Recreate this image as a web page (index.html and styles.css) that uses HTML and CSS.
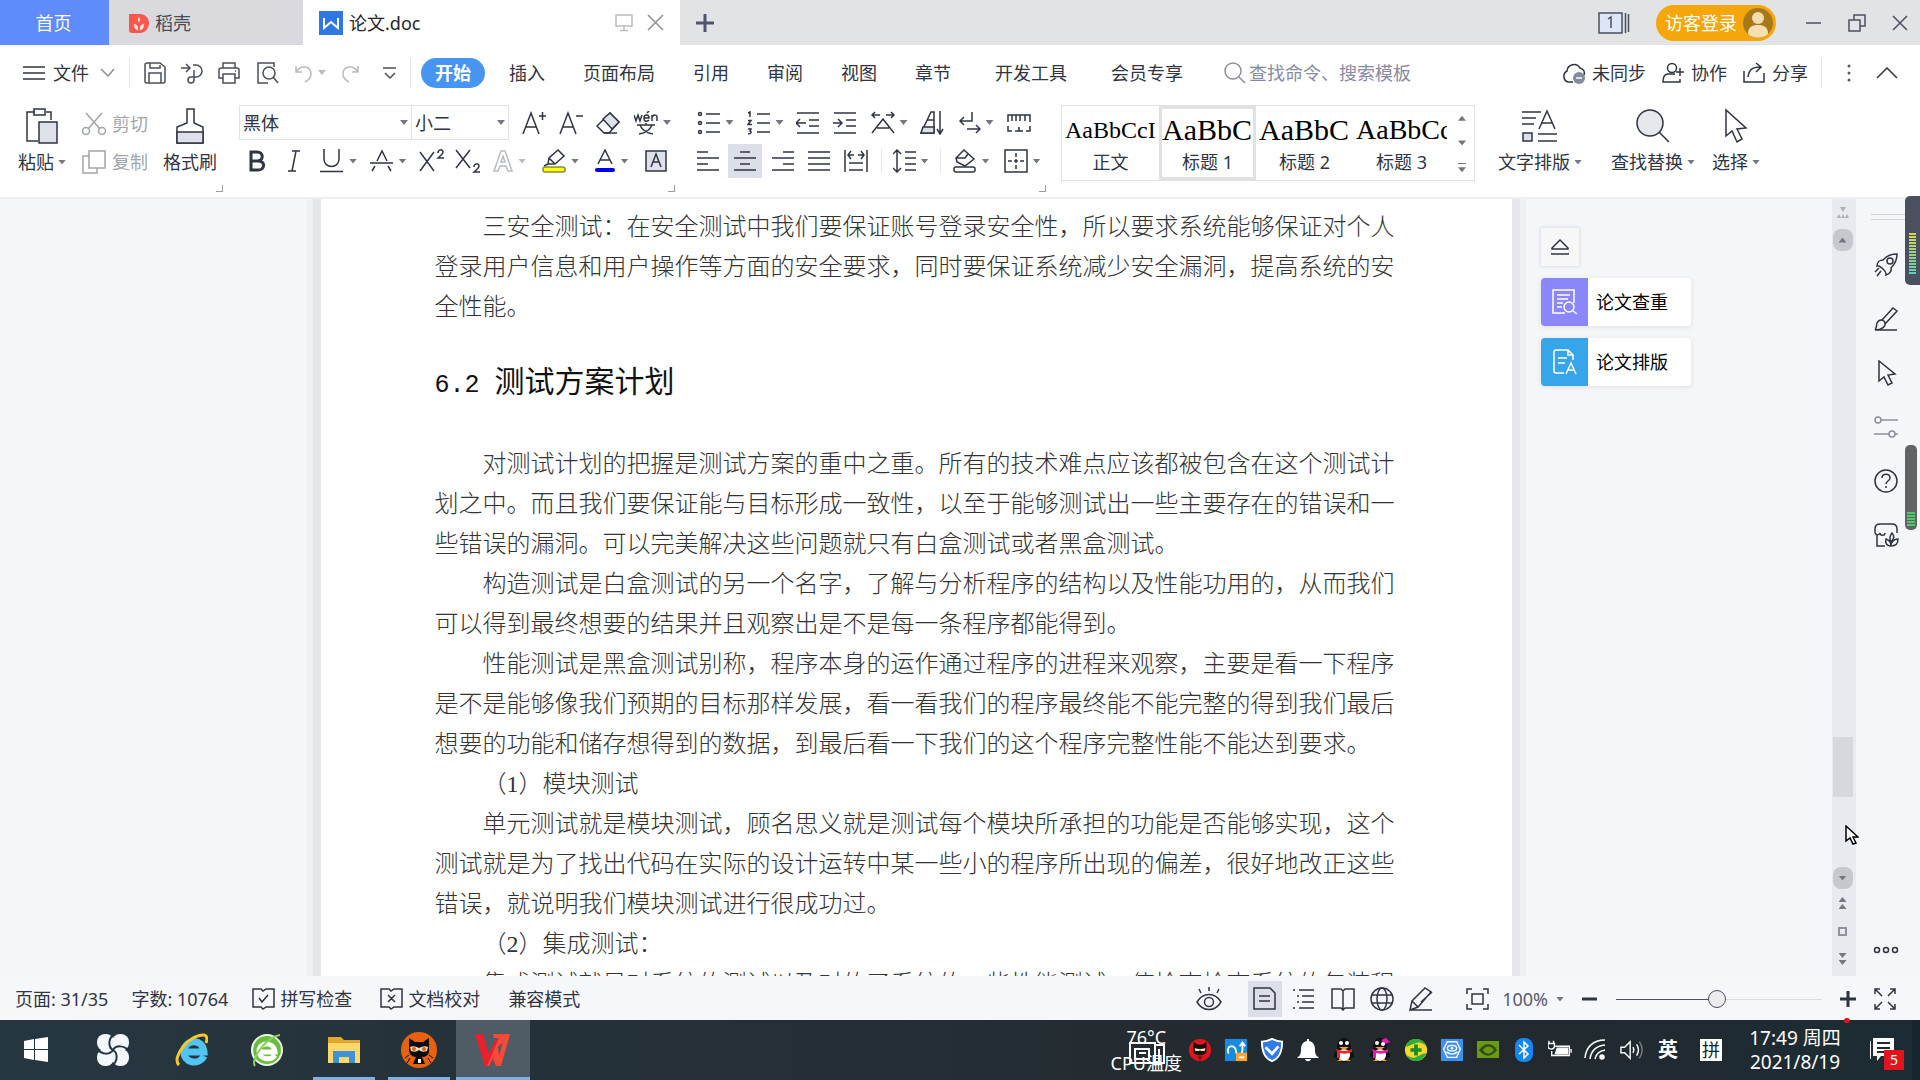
FILE: index.html
```html
<!DOCTYPE html>
<html lang="zh-CN">
<head>
    <meta charset="UTF-8">
    <meta name="viewport" content="width=device-width, initial-scale=1.0">
    <title>论文.doc</title>
    <link rel="stylesheet" href="styles.css">
</head>
<body>
    <!-- window tabs -->
    <header class="tabbar">
        <button class="tab tab-home">首页</button>
        <button class="tab tab-store">
            <svg width="20" height="22" viewBox="0 0 20 22"><path d="M0 2h11c5 0 9 4 9 9s-4 10-9 10H3a3 3 0 0 1-3-3z" fill="#f8574c"/><path d="M10 19V9M10 19c-5-1-6-4-5-8 3 1 5 3 5 8zM10 19c5-1 6-4 5-8-3 1-5 3-5 8zM10 12c-2-3-2-5 0-8 2 3 2 5 0 8z" fill="#ffe0dc" stroke="#f8574c" stroke-width="1"/></svg>
            稻壳
        </button>
        <div class="tab tab-doc">
            <svg width="24" height="24" viewBox="0 0 24 24"><path d="M0 0h24v24H0z" fill="#2f78e4"/><path d="M5 7v10l7-6 7 6V7" fill="none" stroke="#fff" stroke-width="2"/></svg>
            <span class="tab-name">论文.doc</span>
            <button class="icon-btn" aria-label="演示"><svg class="ic light" width="18" height="18" viewBox="0 0 18 18"><path d="M1 1h16v11H1zM9 12v4M5 16.500h8"/></svg></button>
            <button class="icon-btn" aria-label="关闭标签"><svg class="ic grey" width="17" height="17" viewBox="0 0 17 17"><path d="M1 1l15 15M16 1L1 16"/></svg></button>
        </div>
        <button class="icon-btn new-tab" aria-label="新建"><svg class="ic" width="18" height="18" viewBox="0 0 18 18"><path d="M9 0v18M0 9h18" stroke-width="3"/></svg></button>
        <div class="window-tools">
            <button class="icon-btn" aria-label="标签列表"><svg class="ic" width="32" height="22" viewBox="0 0 32 22"><path d="M1 1h23v20H1z" fill="#dde6f5"/><path d="M27.500 1v20M30.500 2v18M10 7l3-2v11"/></svg></button>
            <button class="login">访客登录
                <svg width="30" height="30" viewBox="0 0 30 30"><circle cx="15" cy="15" r="15" fill="#a8791a"/><circle cx="15" cy="10" r="6" fill="#f3dcae"/><path d="M5 26c0-7 4-9 10-9s10 2 10 9c-5 5-15 5-20 0z" fill="#f6dfb1"/></svg>
            </button>
            <button class="icon-btn" aria-label="最小化"><svg class="ic" width="16" height="18" viewBox="0 0 16 18"><path d="M0 9h15"/></svg></button>
            <button class="icon-btn" aria-label="还原"><svg class="ic" width="18" height="18" viewBox="0 0 18 18"><path d="M1 6h11v11H1zM6 6V1h11v11h-5"/></svg></button>
            <button class="icon-btn" aria-label="关闭"><svg class="ic" width="17" height="17" viewBox="0 0 17 17"><path d="M1 2l14 14M15 2L1 16"/></svg></button>
        </div>
    </header>

    <!-- menu row -->
    <nav class="menubar">
        <button class="file-menu">
            <svg class="ic" width="22" height="16" viewBox="0 0 22 16"><path d="M0 2h22M0 8h22M0 14h22"/></svg>
            文件
            <svg class="ic grey" width="15" height="9" viewBox="0 0 15 9"><path d="M1 1l7 7 6-7"/></svg>
        </button>
        <span class="sep"></span>
        <div class="quick">
            <button class="icon-btn" aria-label="保存"><svg class="ic" width="22" height="22" viewBox="0 0 22 22"><path d="M1 3q0-2 2-2h13l5 4v14q0 2-2 2H3q-2 0-2-2zM5 21V11h12v10M6 1v5h10V3"/></svg></button>
            <button class="icon-btn" aria-label="输出"><svg class="ic" width="22" height="22" viewBox="0 0 22 22"><path d="M0 6h9M5 2l4 4-4 4M12 3h3a5.500 5.500 0 0 1 0 12h-5a3 3 0 1 0 3 3V8"/></svg></button>
            <button class="icon-btn" aria-label="打印"><svg class="ic" width="22" height="22" viewBox="0 0 22 22"><path d="M5 6V1h12v5M5 16H1V8q0-2 2-2h16q2 0 2 2v8h-4M5 12h12v9H5zM17 9h1"/></svg></button>
            <button class="icon-btn" aria-label="打印预览"><svg class="ic" width="24" height="22" viewBox="0 0 24 22"><path d="M19 5V1H3v20h10"/><circle cx="14" cy="11" r="6"/><path d="M18 15l5 6"/></svg></button>
            <button class="icon-btn split" aria-label="撤销"><svg class="ic light" width="18" height="20" viewBox="0 0 18 20"><path d="M1 3v6h6M1 9c5-8 15-6 15 2 0 4-2 6-6 8"/></svg><i class="caret pale"></i></button>
            <button class="icon-btn" aria-label="恢复"><svg class="ic light" width="18" height="20" viewBox="0 0 18 20"><path d="M17 3v6h-6M17 9C12 1 2 3 2 11c0 4 2 6 6 8"/></svg></button>
            <button class="icon-btn" aria-label="自定义"><svg class="ic" width="14" height="14" viewBox="0 0 14 14"><path d="M0 2h13M2 7l5 5 5-5"/></svg></button>
        </div>
        <span class="sep"></span>
        <div class="menus">
            <button class="active">开始</button>
            <button>插入</button>
            <button>页面布局</button>
            <button>引用</button>
            <button>审阅</button>
            <button>视图</button>
            <button>章节</button>
            <button>开发工具</button>
            <button>会员专享</button>
        </div>
        <label class="search">
            <svg class="ic grey" width="22" height="22" viewBox="0 0 22 22"><circle cx="9" cy="9" r="8"/><path d="M15 15l6 6"/></svg>
            <input type="text" aria-label="搜索" placeholder="查找命令、搜索模板">
        </label>
        <div class="share-tools">
            <button><svg class="ic" width="25" height="22" viewBox="0 0 25 22"><path d="M12 20H7a6 6 0 0 1-1-11 7 7 0 0 1 13-3c4 1 5 4 4 7"/><circle cx="18" cy="16" r="6" fill="#858b98" stroke="none"/><path d="M15 16h6" stroke="#fff"/></svg>未同步</button>
            <button><svg class="ic" width="23" height="22" viewBox="0 0 23 22"><circle cx="10" cy="6" r="4.500"/><path d="M13 12H6c-3 0-5 3-5 8h17v-3M14 10h8M18 6v8"/></svg>协作</button>
            <button><svg class="ic" width="23" height="22" viewBox="0 0 23 22"><path d="M1 9v11h20V11M5 15c1-7 4-10 12-10M13 1l5 4-5 5"/></svg>分享</button>
        </div>
        <span class="sep"></span>
        <button class="icon-btn more" aria-label="更多"><svg width="4" height="20" viewBox="0 0 4 20" fill="#555b67"><circle cx="2" cy="3" r="1.500"/><circle cx="2" cy="10" r="1.500"/><circle cx="2" cy="17" r="1.500"/></svg></button>
        <button class="icon-btn" aria-label="收起功能区"><svg class="ic" width="22" height="12" viewBox="0 0 22 12"><path d="M1 11L11 1l10 10"/></svg></button>
    </nav>

    <!-- ribbon -->
    <section class="ribbon">
        <div class="group clipboard">
            <button class="big">
                <svg class="ic" width="32" height="36" viewBox="0 0 32 36"><path d="M9 4H1v29h11M20 4h5v8M8 1h11v6H8z"/><path d="M13 14h18v21H13z" fill="#dfe1ea"/></svg>
                <span>粘贴<i class="caret"></i></span>
            </button>
            <div class="stack">
                <button class="off"><svg class="ic" width="24" height="24" viewBox="0 0 24 24"><path d="M4 1l14 16M20 1L6 17"/><circle cx="4" cy="19" r="3.500"/><circle cx="20" cy="19" r="3.500"/></svg>剪切</button>
                <button class="off"><svg class="ic" width="24" height="24" viewBox="0 0 24 24"><path d="M7 1h16v17H7zM7 6H1v17h14v-5"/></svg>复制</button>
            </div>
            <button class="big">
                <svg class="ic" width="28" height="36" viewBox="0 0 28 36"><path d="M11 15V1h7v14l9 4v16H1V19z"/><path d="M1 24h26v11H1z" fill="#dfe1ea"/></svg>
                <span>格式刷</span>
            </button>
            <i class="corner"></i>
        </div>

        <div class="group font">
            <div class="row font-row1">
                <div class="font-box">
                    <span class="pick pick-name"><select aria-label="字体"><option>黑体</option></select></span>
                    <span class="pick pick-size"><select aria-label="字号"><option>小二</option></select></span>
                </div>
                <button aria-label="增大字号"><svg class="ic" width="24" height="24" viewBox="0 0 24 24"><path d="M1 23L9 2l8 21M4 16h10M17 5h7M20.500 1v8"/></svg></button>
                <button aria-label="减小字号"><svg class="ic" width="24" height="24" viewBox="0 0 24 24"><path d="M1 23L9 2l8 21M4 16h10M17 5h7"/></svg></button>
                <button aria-label="清除格式"><svg class="ic" width="24" height="24" viewBox="0 0 24 24"><path d="M14 2l9 9-10 11H8l-7-7z"/><path d="M7 8l7-6 9 9-7 7z" fill="#dfe1ea"/><path d="M8 22h13"/></svg></button>
                <button aria-label="拼音指南" class="split"><svg class="ic" width="24" height="24" viewBox="0 0 24 24"><path d="M0 4l2 6 2-6 2 6 2-6M10 7h5c0-4-5-4-5 0s3 4 5 2M13 2l2-2M18 10V4m0 2c2-3 5-2 5 0v4M3 14h18M12 12v2M6 14c2 5 7 8 13 9M18 14c-2 5-7 8-13 9"/></svg><i class="caret"></i></button>
            </div>
            <div class="row font-row2">
                <button aria-label="加粗"><svg class="ic" width="18" height="22" viewBox="0 0 18 22"><path d="M3 2h6c7 0 7 9 0 9H3zM3 11h7c8 0 7 9 0 9H3z" stroke-width="3"/></svg></button>
                <button aria-label="倾斜"><svg class="ic" width="14" height="22" viewBox="0 0 14 22"><path d="M5 1h8M1 21h8M9 1L5 21"/></svg></button>
                <button aria-label="下划线" class="split"><svg class="ic" width="24" height="24" viewBox="0 0 24 24"><path d="M4 0v10c0 10 15 10 15 0V0M0 22.500h23"/></svg><i class="caret"></i></button>
                <button aria-label="删除线" class="split"><svg class="ic" width="24" height="24" viewBox="0 0 24 24"><path d="M0 14h23M7 12l5-10 5 10M5 17l-3 5M18 17l3 5"/></svg><i class="caret"></i></button>
                <button aria-label="上标"><svg class="ic" width="25" height="24" viewBox="0 0 25 24"><path d="M1 3l14 19M15 3L1 22M19 4c0-4 5-4 5-1 0 2-3 4-5 6h6"/></svg></button>
                <button aria-label="下标"><svg class="ic" width="25" height="24" viewBox="0 0 25 24"><path d="M1 1l14 18M15 1L1 19M19 18c0-4 5-4 5-1 0 2-3 4-5 6h6"/></svg></button>
                <button aria-label="文字效果" class="split"><svg class="ic light" width="20" height="22" viewBox="0 0 20 22"><path d="M1 21L8 1h4l7 20h-4l-2-5H7l-2 5zM8 12h4l-2-6z"/></svg><i class="caret pale"></i></button>
                <button aria-label="突出显示" class="split"><svg class="ic" width="24" height="24" viewBox="0 0 24 24"><path d="M6 15l1-6 9-8 6 6-9 8zM7 9l6 6M6 15l-4 2"/><rect x="1" y="18" width="22" height="5" rx="2" fill="#ff0" stroke="#888b45"/></svg><i class="caret"></i></button>
                <button aria-label="字体颜色" class="split"><svg class="ic" width="22" height="24" viewBox="0 0 22 24"><path d="M4 15l7-14 7 14M6 11h10"/><rect x="1" y="19" width="20" height="4" rx="2" fill="#0000e8" stroke="none"/></svg><i class="caret"></i></button>
                <button aria-label="字符底纹"><svg class="ic" width="22" height="22" viewBox="0 0 22 22"><path d="M1 1h20v20H1z" fill="#dfe1ea"/><path d="M6 17l5-13 5 13M8 12h6"/></svg></button>
            </div>
            <i class="corner"></i>
        </div>

        <div class="group paragraph">
            <div class="row para-row1">
                <button aria-label="项目符号" class="split"><svg class="ic" width="24" height="24" viewBox="0 0 24 24"><circle cx="3" cy="3" r="1.500"/><circle cx="3" cy="12" r="1.500"/><circle cx="3" cy="21" r="1.500"/><path d="M9 3h14M9 12h14M9 21h14"/></svg><i class="caret"></i></button>
                <button aria-label="编号" class="split"><svg class="ic" width="24" height="24" viewBox="0 0 24 24"><path d="M1 2l2-1v5M1 9.500h3l-3 4h4M1 18h3l-1 2c2 1 1 3-2 3M10 3h13M10 12h13M10 21h13"/></svg><i class="caret"></i></button>
                <button aria-label="减少缩进"><svg class="ic" width="24" height="24" viewBox="0 0 24 24"><path d="M1 2h22M13 9h10M13 15h10M1 22h22M0 12h10M4 8l-4 4 4 4"/></svg></button>
                <button aria-label="增加缩进"><svg class="ic" width="24" height="24" viewBox="0 0 24 24"><path d="M1 2h22M13 9h10M13 15h10M1 22h22M0 12h9M5 8l4 4-4 4"/></svg></button>
                <button aria-label="中文版式" class="split"><svg class="ic" width="24" height="24" viewBox="0 0 24 24"><path d="M1 22L12 8l11 14M6 17h12M1 4h8M4 1L1 4l3 3M15 4h8M20 1l3 3-3 3"/></svg><i class="caret"></i></button>
                <button aria-label="排序"><svg class="ic" width="24" height="24" viewBox="0 0 24 24"><path d="M1 22L11 1h3v21z"/><path d="M3 16h11v6H1z" fill="#dfe1ea"/><path d="M7 9h7M20 0v22M17 18l3 5 3-5"/></svg></button>
                <button aria-label="换行" class="split"><svg class="ic" width="22" height="24" viewBox="0 0 22 24"><path d="M13 1v9H1M5 6l-4 4 4 4M8 18h13M17 14l4 4-4 4"/></svg><i class="caret"></i></button>
                <button aria-label="制表位"><svg class="ic" width="24" height="20" viewBox="0 0 24 20"><path d="M1 9V2h22v7M5 2v6M9 2v6M13 2v6M18 2v6M1 13v5h4M8 18h8M12 14v4M23 13v5h-4"/></svg></button>
            </div>
            <div class="row para-row2">
                <button aria-label="左对齐"><svg class="ic" width="22" height="22" viewBox="0 0 22 22"><path d="M0 2h11M0 8h22M0 14h11M0 20h22"/></svg></button>
                <button aria-label="居中对齐" class="on"><svg class="ic" width="22" height="22" viewBox="0 0 22 22"><path d="M6 2h10M0 8h22M6 14h10M0 20h22"/></svg></button>
                <button aria-label="右对齐"><svg class="ic" width="22" height="22" viewBox="0 0 22 22"><path d="M11 2h11M0 8h22M11 14h11M0 20h22"/></svg></button>
                <button aria-label="两端对齐"><svg class="ic" width="22" height="22" viewBox="0 0 22 22"><path d="M0 2h22M0 8h22M0 14h22M0 20h22"/></svg></button>
                <button aria-label="分散对齐"><svg class="ic" width="24" height="22" viewBox="0 0 24 22"><path d="M1 0v22M23 0v22M5 13h14M5 20h14M4 5h6M7 1L4 5l3 4M14 5h6M17 1l3 4-3 4"/></svg></button>
                <span class="sep"></span>
                <button aria-label="行距" class="split"><svg class="ic" width="23" height="24" viewBox="0 0 23 24"><path d="M4 1v22M0 5l4-4 4 4M0 19l4 4 4-4M12 3h11M12 9h11M12 15h11M12 21h11"/></svg><i class="caret"></i></button>
                <span class="sep"></span>
                <button aria-label="底纹颜色" class="split"><svg class="ic" width="24" height="24" viewBox="0 0 24 24"><path d="M3 9l8-8 10 9-9 7-8-4zM3 9h9l3-4"/><rect x="1" y="18" width="21" height="5" rx="2"/></svg><i class="caret"></i></button>
                <button aria-label="边框" class="split"><svg class="ic" width="24" height="24" viewBox="0 0 24 24"><path d="M1 1h22v22H1z"/><path d="M12 4v16M4 12h16" stroke-dasharray="4 2"/></svg><i class="caret"></i></button>
            </div>
            <i class="corner"></i>
        </div>

        <div class="gallery">
            <button class="style-item"><b class="s24">AaBbCcI</b>正文</button>
            <button class="style-item chosen"><b>AaBbC</b>标题 1</button>
            <button class="style-item"><b>AaBbC</b>标题 2</button>
            <button class="style-item"><b class="s26">AaBbCc</b>标题 3</button>
            <div class="gallery-arrows">
                <button aria-label="上一行"><i class="caret up"></i></button>
                <button aria-label="下一行"><i class="caret"></i></button>
                <button aria-label="展开样式" class="expand"><i class="caret"></i></button>
            </div>
        </div>

        <div class="group edit">
            <button class="big">
                <svg class="ic" width="36" height="34" viewBox="0 0 36 34"><path d="M0 3h19M0 9h14M0 15h12M17 20l8-18 8 18M20 14h10M16 25h19M16 32h19"/><path d="M1 24h9v8H1z" fill="#dfe1ea"/></svg>
                <span>文字排版<i class="caret"></i></span>
            </button>
            <button class="big">
                <svg class="ic" width="34" height="34" viewBox="0 0 34 34"><circle cx="14" cy="14" r="13" fill="#e6e8ec"/><path d="M23 23l10 10"/></svg>
                <span>查找替换<i class="caret"></i></span>
            </button>
            <button class="big">
                <svg class="ic" width="24" height="34" viewBox="0 0 24 34"><path d="M2 1v26l6-5 5 11 5-3-5-10 9-1z"/></svg>
                <span>选择<i class="caret"></i></span>
            </button>
        </div>
    </section>

    <!-- document -->
    <main class="workspace">
        <div class="canvas">
            <article class="page">
                <p>三安全测试：在安全测试中我们要保证账号登录安全性，所以要求系统能够保证对个人登录用户信息和用户操作等方面的安全要求，同时要保证系统减少安全漏洞，提高系统的安全性能。</p>
                <h2><span class="num">6.2 </span>测试方案计划</h2>
                <p>对测试计划的把握是测试方案的重中之重。所有的技术难点应该都被包含在这个测试计划之中。而且我们要保证能与目标形成一致性，以至于能够测试出一些主要存在的错误和一些错误的漏洞。可以完美解决这些问题就只有白盒测试或者黑盒测试。</p>
                <p>构造测试是白盒测试的另一个名字，了解与分析程序的结构以及性能功用的，从而我们可以得到最终想要的结果并且观察出是不是每一条程序都能得到。</p>
                <p>性能测试是黑盒测试别称，程序本身的运作通过程序的进程来观察，主要是看一下程序是不是能够像我们预期的目标那样发展，看一看我们的程序最终能不能完整的得到我们最后想要的功能和储存想得到的数据，到最后看一下我们的这个程序完整性能不能达到要求。</p>
                <p>（1）模块测试</p>
                <p>单元测试就是模块测试，顾名思义就是测试每个模块所承担的功能是否能够实现，这个测试就是为了找出代码在实际的设计运转中某一些小的程序所出现的偏差，很好地改正这些错误，就说明我们模块测试进行很成功过。</p>
                <p>（2）集成测试：</p>
                <p>集成测试就是对系统的测试以及对的了系统的一些性能测试，使检查检查系统的包装程</p>
            </article>
            <aside class="helpers">
                <button class="collapse" aria-label="收起"><svg class="ic" width="18" height="16" viewBox="0 0 18 16"><path d="M1 9l8-8 8 8v1H1zM0 15h18"/></svg></button>
                <button class="helper">
                    <span class="helper-icon violet"><svg class="ic" width="26" height="26" viewBox="0 0 26 26"><path d="M13 24H1V1h21v13M5 6h13M5 10h11M5 14h6M5 18h5"/><circle cx="17" cy="18" r="5"/><path d="M21 22l4 3"/></svg></span>
                    论文查重
                </button>
                <button class="helper">
                    <span class="helper-icon blue"><svg class="ic" width="26" height="26" viewBox="0 0 26 26"><path d="M12 24H4q-2 0-2-2V3q0-2 2-2h12l5 5v5M16 1v5h5M6 9h9M6 14h7M14 25l5-11 5 11M16 21h6"/></svg></span>
                    论文排版
                </button>
            </aside>
        </div>
        <div class="scrollbar">
            <svg class="scroll-top" width="14" height="14" viewBox="0 0 14 14" fill="#aeb0b7"><path d="M4 1h6L7 6zM1 12l2-4 2 4zM5 12l2-4 2 4zM9 12l2-4 2 4z"/></svg>
            <button class="round" aria-label="向上滚动"><i class="caret up"></i></button>
            <div class="track"><i class="thumb"></i></div>
            <button class="round" aria-label="向下滚动"><i class="caret"></i></button>
            <button aria-label="上一页" class="jump"><i class="caret up"></i><i class="caret up"></i></button>
            <button aria-label="选择浏览对象" class="jump"><i class="square"></i></button>
            <button aria-label="下一页" class="jump"><i class="caret"></i><i class="caret"></i></button>
        </div>
        <aside class="sidebar">
            <i class="grip"></i>
            <button aria-label="快速"><svg class="ic" width="26" height="26" viewBox="0 0 26 26"><path d="M9 16c-2-1-3-3-5-2 0-4 3-6 6-6 4-5 8-6 14-6 0 6-2 10-6 14 1 4-2 6-5 7 1-3-2-5-4-7z"/><circle cx="17" cy="9" r="3"/><path d="M6 16l-4 4M8 19l-4 5"/></svg></button>
            <button aria-label="画笔"><svg class="ic" width="26" height="26" viewBox="0 0 26 26"><path d="M9 14L20 2l4 3-12 13M2 24c2-2 1-4 2-7 2-4 7-4 8 0 1 3-3 7-10 7h22"/></svg></button>
            <button aria-label="选择窗格"><svg class="ic" width="26" height="26" viewBox="0 0 26 26"><path d="M6 1v20l5-4 4 8 4-2-4-8 7-1z"/></svg></button>
            <button aria-label="设置"><svg class="ic grey" width="26" height="26" viewBox="0 0 26 26"><circle cx="5" cy="6" r="3"/><path d="M8 6h17M1 20h15M22 20h3"/><circle cx="19" cy="20" r="3"/></svg></button>
            <button aria-label="帮助"><svg class="ic" width="26" height="26" viewBox="0 0 26 26"><circle cx="13" cy="13" r="11"/><path d="M9 10c0-5 8-5 8 0 0 3-4 3-4 6M13 18v2"/></svg></button>
            <button aria-label="稻壳商城"><svg class="ic" width="26" height="26" viewBox="0 0 26 26"><path d="M4 13v11h8M2 11V7c0-3 2-5 5-5h12c3 0 5 2 5 5v4M2 11c2 3 4 2 5 0 0 3 5 3 5 0M18 24c-5 0-6-4-5-7 3 1 5 3 5 7zM18 24c5 0 7-3 7-7-4 0-7 3-7 7zM18 20c-2-4-1-6 1-9 3 3 2 6-1 9z"/></svg></button>
            <button aria-label="更多工具" class="sidebar-more"><svg class="ic" width="26" height="8" viewBox="0 0 26 8"><circle cx="4" cy="4" r="2.500"/><circle cx="13" cy="4" r="2.500"/><circle cx="22" cy="4" r="2.500"/></svg></button>
        </aside>
        <svg class="pointer" width="14" height="20" viewBox="0 0 14 20"><path d="M1 1v15l4-3 3 6 3-1-3-6h5z" fill="#fff" stroke="#000" stroke-width="1.500"/></svg>
    </main>
    <div class="meter meter-top"><i></i></div>
    <div class="meter meter-low"><i></i></div>

    <!-- status bar -->
    <footer class="statusbar">
        <span>页面: 31/35</span>
        <span>字数: 10764</span>
        <button><svg class="ic" width="23" height="22" viewBox="0 0 23 22"><path d="M1 1h8l2 2 3-2h8v18h-8l-3 2-2-2H1zM7 10l3 4 6-7"/></svg>拼写检查</button>
        <button><svg class="ic" width="23" height="22" viewBox="0 0 23 22"><path d="M1 1h8l2 2 3-2h8v18h-8l-3 2-2-2H1zM8 7l7 7M15 7l-7 7"/></svg>文档校对</button>
        <span>兼容模式</span>
        <div class="views">
            <button aria-label="护眼模式"><svg class="ic" width="26" height="26" viewBox="0 0 26 26"><path d="M1 16c6-10 18-10 24 0-6 10-18 10-24 0zM13 1v4M3 3l2 4M23 3l-2 4"/><circle cx="13" cy="16" r="4.500"/></svg></button>
            <button aria-label="页面视图" class="on"><svg class="ic" width="24" height="24" viewBox="0 0 24 24"><path d="M1 1h16l5 5v16H1zM6 9h11M6 14h11"/></svg></button>
            <button aria-label="大纲"><svg class="ic" width="24" height="24" viewBox="0 0 24 24"><path d="M1 3h2M7 3h15M5 9h2M10 9h12M5 15h2M10 15h12M1 21h2M7 21h15"/></svg></button>
            <button aria-label="阅读版式"><svg class="ic" width="24" height="24" viewBox="0 0 24 24"><path d="M1 2h9l2 2 2-2h9v19h-9l-2 2-2-2H1zM12 4v18"/></svg></button>
            <button aria-label="Web版式"><svg class="ic" width="24" height="24" viewBox="0 0 24 24"><circle cx="12" cy="12" r="11"/><ellipse cx="12" cy="12" rx="5" ry="11"/><path d="M2 8h20M2 16h20"/></svg></button>
            <button aria-label="写作模式"><svg class="ic" width="26" height="26" viewBox="0 0 26 26"><path d="M2 24l2-9L17 2l6 4-13 15zM4 15l6 6M13 16L24 6M2 24h22"/></svg></button>
        </div>
        <div class="zoom">
            <button aria-label="适合页面"><svg class="ic" width="23" height="22" viewBox="0 0 23 22"><path d="M1 6V1h5M17 1h5v5M22 16v5h-5M6 21H1v-5M6 6h11v10H6z"/></svg></button>
            <button class="percent">100%<i class="caret"></i></button>
            <button aria-label="缩小"><svg class="ic" width="16" height="16" viewBox="0 0 16 16"><path d="M0 8h15" stroke-width="3"/></svg></button>
            <input type="range" aria-label="显示比例" min="0" max="100" value="49">
            <button aria-label="放大"><svg class="ic" width="16" height="16" viewBox="0 0 16 16"><path d="M0 8h16M8 0v16" stroke-width="3"/></svg></button>
            <button aria-label="全屏"><svg class="ic" width="22" height="22" viewBox="0 0 22 22"><path d="M1 6V1h5M1 1l7 7M16 1h5v5M21 1l-7 7M21 16v5h-5M21 21l-7-7M6 21H1v-5M1 21l7-7"/></svg></button>
        </div>
    </footer>

    <!-- taskbar -->
    <div class="taskbar">
        <div class="apps">
            <button aria-label="开始菜单"><svg width="26" height="26" viewBox="0 0 26 26" fill="#fff"><path d="M1 4l10-2v10H1zM12 2l13-2v12H12zM1 13h10v10L1 21zM12 13h13v12l-13-2z"/></svg></button>
            <button aria-label="浏览助手"><svg width="34" height="34" viewBox="0 0 34 34"><g fill="#f4f7fb"><rect x="1" y="1" width="17" height="17" rx="8"/><rect x="16" y="1" width="17" height="17" rx="8"/><rect x="1" y="16" width="17" height="17" rx="8"/><rect x="16" y="16" width="17" height="17" rx="8"/><path d="M11 11h12v12H11z"/></g><path d="M17 17C12 14 12 6 18 1M17 17c3-5 11-5 16 1M17 17c5 3 5 11-1 16M17 17c-3 5-11 5-16-1" fill="none" stroke="#263640" stroke-width="2"/></svg></button>
            <button aria-label="Internet Explorer"><svg width="34" height="34" viewBox="0 0 34 34" fill="none"><path d="M30 23c-5 10-21 7-20-5s19-13 20 1H12" stroke="#52c4f2" stroke-width="7"/><path d="M5 32C-3 25 15 1 30 2c4 1 3 5 2 8" stroke="#f5c62d" stroke-width="3"/></svg></button>
            <button aria-label="安全浏览器"><svg width="34" height="34" viewBox="0 0 34 34" fill="none"><circle cx="17" cy="17" r="15" fill="#69bd3c" stroke="#eef8e8" stroke-width="2"/><path d="M25 22c-4 6-16 5-16-4s15-10 16 1H11" stroke="#fff" stroke-width="5"/><path d="M5 33C0 27 16 4 30 2" stroke="#8ad05b" stroke-width="2"/></svg></button>
            <button aria-label="文件资源管理器" class="running"><svg width="34" height="30" viewBox="0 0 34 30"><path d="M1 2h13l3 3h16v23H1z" fill="#e0a92e"/><path d="M1 8h32v20H1z" fill="#ffd76a"/><path d="M6 28V16h22v12h-6v-6H12v6z" fill="#3d92d8"/></svg></button>
            <button aria-label="录屏" class="running"><svg width="36" height="36" viewBox="0 0 36 36"><circle cx="18" cy="18" r="18" fill="#e86110"/><path d="M8 6l6 4h8l6-4v13c0 5-5 6-7 6l3 7H12l3-7c-4 0-7-3-7-7z" fill="#0b0b0b"/><path d="M9 15q4-2 9 1 5-3 9-1l-1 4q-5 2-8-1-3 3-8 1z" fill="#f2d8c5"/><circle cx="13" cy="17" r="2" fill="#e86110"/><circle cx="23" cy="17" r="2" fill="#e86110"/><path d="M8 23l-4 3M9 26l-3 5M28 23l4 3M27 26l3 5" stroke="#111"/><path d="M17 27h3v4h-3z" fill="#fff"/></svg></button>
            <button aria-label="WPS" class="running current"><svg width="36" height="34" viewBox="0 0 36 34"><path d="M0 1h8l6 20 6-14h4l-2 10-7 16h-5z" fill="#e9202d"/><path d="M18 1h17l-9 32h-5l-3-8-4 8h-2L24 5h-5z" fill="#fa4934"/><path d="M23 14l1 9 4-14z" fill="#4f5c65"/></svg></button>
        </div>
        <div class="tray">
            <div class="cpu"><span>76°C</span><span>CPU温度</span><svg class="ic" width="38" height="26" viewBox="0 0 38 26"><path d="M1 3h25v20H1zM26 5h9v18h-9M6 9h14v10H6zM10 13h7M30 9v12" stroke-width="2"/></svg></div>
            <svg width="26" height="26" viewBox="0 0 26 26"><circle cx="13" cy="13" r="12" fill="#e3151b"/><path d="M6 4l4 3h6l4-3v11c0 5-14 5-14 0z" fill="#111"/><path d="M7 11l5 1h2l5-1-1 3h-4l-1-1-1 1H8z" fill="#ffe3b5"/><path d="M10 20h6l-3 4z" fill="#6d1010"/></svg>
            <svg width="26" height="26" viewBox="0 0 26 26"><path d="M1 1h24v24H1z" fill="#178be1"/><path d="M5 17c-4-9 7-11 8-3 0 6 7 6 7-2V6m-3 3l3-4 3 4" fill="none" stroke="#fff" stroke-width="2"/><path d="M13 16h12v9H13z" fill="#f9a634"/><path d="M16 21h6" stroke="#fff" stroke-width="2"/></svg>
            <svg width="26" height="26" viewBox="0 0 26 26"><path d="M13 1c4 2 7 3 11 3 0 11-3 18-11 21C5 22 2 15 2 4c4 0 7-1 11-3z" fill="#2f7be9" stroke="#fff" stroke-width="2"/><path d="M6 10l7 7 7-8" fill="none" stroke="#fff" stroke-width="3"/></svg>
            <svg width="24" height="24" viewBox="0 0 24 24" fill="#fff"><path d="M11 1h2v2c5 1 6 5 6 9 0 5 2 6 4 8H1c2-2 4-3 4-8 0-4 1-8 6-9zM9 21h6c-1 3-5 3-6 0z"/></svg>
            <svg width="24" height="26" viewBox="0 0 24 26"><path d="M5 12C5-3 19-3 19 12c5 7 3 10 1 8-2 7-14 7-16 0-2 2-4-1 1-8z" fill="#111"/><ellipse cx="12" cy="18" rx="6" ry="6" fill="#fff"/><path d="M4 12q8 4 16 0v3q-6 3-12 1v5H5v-6z" fill="#e7292c"/><circle cx="9" cy="6" r="2" fill="#fff"/><circle cx="15" cy="6" r="2" fill="#fff"/><path d="M7 10h10l-5 3zM5 24h6l-3-2zM13 24h6l-3-2z" fill="#f4a125"/></svg>
            <svg width="24" height="26" viewBox="0 0 24 26"><path d="M5 12C5-3 19-3 19 12c5 7 3 10 1 8-2 7-14 7-16 0-2 2-4-1 1-8z" fill="#111"/><ellipse cx="12" cy="18" rx="6" ry="6" fill="#fff"/><path d="M4 12q8 4 16 0v3q-6 3-12 1v5H5v-6zM13 3l5-2 4 4-5 2z" fill="#e918ae"/><circle cx="9" cy="6" r="2" fill="#fff"/><circle cx="15" cy="7" r="2" fill="#fff"/><path d="M7 10h10l-5 3zM5 24h6l-3-2zM13 24h6l-3-2z" fill="#f4a125"/></svg>
            <svg width="26" height="26" viewBox="0 0 26 26"><circle cx="13" cy="13" r="12" fill="#f6d72d"/><path d="M2 9C6-2 21-1 24 9c-4-5-9-5-12-3-5 1-7 4-10 3zM24 17c-4 10-17 11-22 1 5 4 9 4 12 2 4-1 6-4 10-3z" fill="#2cae3b"/><path d="M13 7v12M7 13h12" stroke="#168b2a" stroke-width="4"/></svg>
            <svg width="26" height="26" viewBox="0 0 26 26"><path d="M1 1h24v24H1z" fill="#3e90f0"/><g fill="none" stroke="#fff" stroke-width="1.500"><path d="M8 4h10l4 8-4 9H8l-4-9z"/><ellipse cx="13" cy="11" rx="5" ry="3"/><path d="M7 15q6 5 12 0"/></g><circle cx="13" cy="11" r="1.500" fill="#fff"/></svg>
            <svg width="24" height="20" viewBox="0 0 24 20"><path d="M1 1h22v17H1z" fill="#699a12"/><path d="M3 10c5-7 13-8 18 0-6 8-13 7-18 0zm4 0c3 5 8 4 11 0-4-5-8-4-11 0z" fill="#344c16"/></svg>
            <svg width="20" height="26" viewBox="0 0 20 26"><rect x="1" y="1" width="18" height="24" rx="8" fill="#1687f0"/><path d="M5 8l9 9-4 4V5l4 4-9 8" fill="none" stroke="#fff" stroke-width="1.500"/></svg>
            <svg class="ic" width="26" height="20" viewBox="0 0 26 20"><path d="M8 6h15v10H4v-5M1 0v3M6 0v3M0 3h7v3c0 4-7 4-7 0zM25 9v4"/><path d="M10 8h11v6H8z" fill="#fff"/></svg>
            <svg class="ic" width="24" height="24" viewBox="0 0 24 24"><path d="M1 20C2 9 9 2 21 2M6 21c1-8 6-13 15-14M11 21c1-5 4-8 10-9"/><circle cx="18" cy="19" r="2" fill="#fff"/></svg>
            <svg class="ic" width="26" height="22" viewBox="0 0 26 22"><path d="M1 8h4l6-6v18l-6-6H1zM14 8q2 3 0 6M18 5q4 6 0 12"/><path d="M21 2q6 9 0 18" stroke="#77818a"/></svg>
            <span class="ime">英</span>
            <span class="pinyin">拼</span>
            <div class="clock"><span>17:49 周四</span><span>2021/8/19</span><i class="rec-dot"></i></div>
            <button class="notice" aria-label="通知"><svg width="24" height="26" viewBox="0 0 24 26"><path d="M0 5h1v18H0zM3 2h21v18H11l-4 5v-5H3z" fill="#fff"/><path d="M7 7h13M7 12h13M7 16h8" stroke="#1e2c33" stroke-width="2"/></svg><span class="badge">5</span></button>
        </div>
    </div>
</body>
</html>
```
FILE: styles.css
```css
* { box-sizing: border-box; }
body {
    margin: 0;
    height: 100vh;
    display: flex;
    flex-direction: column;
    overflow: hidden;
    font: 18px/24px "Noto Sans", "Noto Sans CJK SC", sans-serif;
    color: #2f3542;
    background: #fff;
}
button, input, select { font: inherit; color: inherit; }
button { border: 0; padding: 0; background: none; display: flex; align-items: center; justify-content: center; white-space: nowrap; }
svg { display: block; flex: none; }
.ic { fill: none; stroke: currentColor; stroke-width: 1.5; }
.ic.grey { color: #8c909b; }
.ic.light { color: #b8bbc1; }
.split { gap: 5px; }
.caret { flex: none; width: 8px; height: 5px; background: #737781; clip-path: polygon(0 0, 100% 0, 50% 100%); }
.caret.up { clip-path: polygon(50% 0, 100% 100%, 0 100%); }
.caret.pale { background: #b8bbc1; }
.sep { width: 1px; background: #e6e7ea; }

/* tabs */
.tabbar { flex: none; height: 45px; display: flex; background: #e1e3e5; }
.tab { display: flex; align-items: center; color: #474c55; }
.tab-home { width: 109px; background: #608bfb; color: #fff; padding-right: 2px; }
.tab-store { width: 194px; background: #dadade; justify-content: flex-start; padding-left: 20px; gap: 6px; }
.tab-doc { width: 377px; background: #fff; padding: 0 16px; gap: 6px; color: #22252b; }
.tab-name { flex: 1; }
.tab-doc .icon-btn { margin-left: 8px; }
.new-tab { width: 50px; color: #4e5470; }
.window-tools { margin-left: auto; display: flex; align-items: center; gap: 26px; padding-right: 11px; color: #4b5060; }
.login { height: 36px; border-radius: 18px; background: #f5a60b; color: #fff; padding: 0 3px 0 9px; gap: 6px; margin-right: 4px; }

/* menu */
.menubar { flex: none; height: 55px; display: flex; align-items: center; padding: 0 22px 0 23px; }
.menubar > .sep { height: 30px; }
.file-menu { gap: 8px; margin-right: 14px; }
.file-menu .grey { margin-left: 3px; }
.quick { display: flex; align-items: center; gap: 15px; padding: 0 13px 0 14px; color: #4b4f57; }
.quick .split { margin-left: 1px; }
.quick .icon-btn:last-child { margin-left: 9px; }
.menus { display: flex; align-items: center; gap: 38px; padding-left: 10px; }
.menus .active { width: 64px; height: 30px; border-radius: 15px; background: #4795f0; color: #fff; font-weight: bold; margin-right: -14px; }
.menus button:nth-last-child(-n+2) { margin-left: 6px; }
.search { display: flex; align-items: center; gap: 3px; margin-left: 41px; }
.search input { width: 180px; border: 0; padding: 0; outline: 0; background: none; }
.search input::placeholder { color: #858ba0; opacity: 1; }
.share-tools { margin-left: auto; display: flex; gap: 16px; margin-right: 13px; }
.share-tools button { gap: 6px; }
.more { width: 54px; }

/* ribbon */
.ribbon { flex: none; height: 99px; display: flex; padding: 5px 0 0 17px; border-bottom: 2px solid #eeeff1; }
.group { position: relative; }
.corner { position: absolute; right: 0; bottom: 5px; width: 7px; height: 7px; border: solid #9a9da5; border-width: 0 1px 1px 0; }
.big { flex-direction: column; justify-content: flex-start; gap: 6px; padding-top: 3px; }
.big svg { height: 36px; }
.big span { display: flex; align-items: center; gap: 4px; }
.clipboard { display: grid; grid-template-columns: 50px 66px 54px; column-gap: 15px; width: 206px; }
.stack { display: flex; flex-direction: column; }
.stack button { height: 38px; justify-content: flex-start; gap: 6px; }
.off { color: #a2a5ab; }
.row { display: grid; align-items: center; }
.row button { height: 34px; }
.row .sep { height: 24px; justify-self: center; }
.font-row1, .para-row1 { height: 35px; }
.font-row2, .para-row2 { height: 42px; }
.font { margin-left: 16px; width: 436px; }
.font-row1 { grid-template-columns: 272px 45px 29px 45px 45px; }
.font-row2 { grid-template-columns: 36px 37px 53px 46px 40px 33px 51px 51px 50px 39px; }
.font-box { display: flex; width: 270px; height: 35px; border: 1px solid #e1e2e5; }
.pick { position: relative; display: flex; }
.pick::after { content: ""; position: absolute; right: 3px; top: 14px; width: 8px; height: 5px; background: #737781; clip-path: polygon(0 0, 100% 0, 50% 100%); }
.pick select { appearance: none; border: 0; background: none; width: 100%; padding: 0 3px; outline: 0; }
.pick-name { width: 172px; border-right: 1px solid #e1e2e5; }
.pick-size { flex: 1; }
.paragraph { margin-left: 15px; width: 356px; }
.para-row1 { grid-template-columns: 50px 50px 36px 38px 50px 36px 52px 34px; }
.para-row2 { grid-template-columns: 36px 38px 37px 36px 38px 12px 47px 13px 48px 54px; }
.on { background: #dcdfe8; }
.row .on { width: 34px; justify-self: center; }

.gallery { display: flex; height: 76px; margin-left: 15px; border: 1px solid #e1e2e5; }
.style-item { width: 97px; flex-direction: column; justify-content: flex-end; padding-bottom: 6px; overflow: hidden; }
.style-item b { width: 91px; overflow: hidden; text-align: left; font: 30px/40px "Liberation Serif", serif; color: #000; }
.style-item .s24 { font-size: 24px; }
.style-item .s26 { font-size: 28px; }
.chosen { box-shadow: inset 0 0 0 3px #dfe1e5; }
.gallery-arrows { width: 24px; display: flex; flex-direction: column; justify-content: space-around; align-items: center; }
.gallery-arrows button { height: 20px; }
.expand { flex-direction: column; }
.expand::before { content: ""; width: 8px; height: 1px; background: #737781; margin-bottom: 3px; }
.edit { display: flex; gap: 29px; margin-left: 23px; }
.edit .big:last-child { margin-left: -12px; }

/* document */
.workspace { position: relative; flex: 1; min-height: 0; display: flex; background: #f5f6fa; }
.canvas { position: relative; flex: 1; display: flex; justify-content: center; align-items: flex-start; overflow: hidden; }
.page {
    width: 1191px;
    padding: 8px 114px;
    background: #fff;
    box-shadow: 0 0 0 8px #e5e6e9, 0 0 0 14px #eff0f3;
    font: 24px/40px "Liberation Serif", "Noto Sans CJK SC", serif;
    font-weight: 300;
    text-spacing-trim: space-all;
    color: #333;
}
.page p { margin: 0; text-indent: 48px; }
.page h2 { display: flex; align-items: baseline; height: 40px; margin: 32px 0 45px; font: 30px/40px "Noto Sans CJK SC", sans-serif; color: #111; white-space: pre; }
.num { font: 25px/30px "Liberation Mono", monospace; }
.helpers { position: absolute; top: 29px; right: 141px; width: 150px; display: flex; flex-direction: column; gap: 12px; }
.collapse { width: 38px; height: 38px; background: #f7f7f8; box-shadow: 0 0 4px #d0d1d5; }
.helper { height: 48px; justify-content: flex-start; gap: 8px; border-radius: 4px; overflow: hidden; background: #fff; box-shadow: 0 1px 5px #dcdde1; color: #000; }
.helper-icon { width: 47px; height: 48px; display: flex; align-items: center; justify-content: center; color: #fff; }
.violet { background: #8b86fa; }
.blue { background: #36a5ea; }

.scrollbar { width: 24px; display: flex; flex-direction: column; align-items: center; background: #e9eaf0; padding: 7px 3px 3px 0; }
.scroll-top { margin-bottom: 9px; }
.round { width: 20px; height: 22px; border-radius: 8px; background: #c5c8cd; }
.track { flex: 1; display: flex; flex-direction: column; width: 20px; }
.track::before { content: ""; flex: 484; }
.track::after { content: ""; flex: 70; }
.thumb { flex: 60; background: #d5d8dd; }
.jump { height: 28px; flex-direction: column; gap: 2px; }
.square { width: 9px; height: 9px; border: 2px solid #8f929a; }
.sidebar { width: 64px; display: flex; flex-direction: column; align-items: center; padding: 15px 4px 22px 0; }
.grip { width: 34px; height: 6px; border: solid #d0d2d6; border-width: 1px 0; margin-left: 4px; margin-bottom: 32px; }
.sidebar button { height: 26px; margin-bottom: 28px; }
.sidebar .sidebar-more { height: 8px; margin-top: auto; margin-bottom: 0; }
.pointer { position: absolute; right: 61px; bottom: 131px; }
.meter { position: absolute; right: 0; display: flex; align-items: flex-end; justify-content: center; border-radius: 5px; }
.meter-top { top: 196px; width: 15px; height: 89px; background: #4b5060; border-radius: 5px 0 0 5px; padding-bottom: 10px; }
.meter-top i { width: 7px; height: 42px; background: repeating-linear-gradient(transparent 0 2px, #4b5060 2px 3px), linear-gradient(#d9d84a, #58d0b8); }
.meter-low { top: 445px; right: 3px; width: 12px; height: 85px; background: #626366; padding-bottom: 3px; }
.meter-low i { width: 8px; height: 15px; background: repeating-linear-gradient(#4dc968 0 2px, #626366 2px 3px); }

/* status */
.statusbar { flex: none; height: 44px; display: flex; align-items: center; gap: 28px; padding: 2px 24px 0 15px; background: #f6f7fb; }
.statusbar > span:first-child { margin-right: -5px; }
.statusbar > span:nth-child(2) { margin-right: -4px; }
.statusbar > button { gap: 5px; }
.views { margin-left: auto; display: flex; align-items: center; gap: 5px; }
.views button { width: 34px; height: 36px; }
.views button:first-child { margin-right: 17px; }
.zoom { display: flex; align-items: center; gap: 18px; }
.percent { gap: 8px; color: #555b6b; margin: 0 0 0 -5px; }
.zoom input { appearance: none; width: 206px; height: 18px; margin: 0; background: linear-gradient(90deg, #4b5060 49%, #d8dade 49%) center / 100% 1px no-repeat; }
.zoom input::-webkit-slider-thumb { appearance: none; width: 18px; height: 18px; border: 1px solid #4b5060; border-radius: 50%; background: #ececee; }

/* taskbar */
.taskbar { flex: none; height: 60px; display: flex; justify-content: space-between; background: linear-gradient(90deg, #263640, #23292d 75%, #1c2c34); color: #fff; }
.apps { display: flex; }
.apps button { width: 74px; height: 60px; margin-right: 2px; }
.apps button:first-child { width: 72px; }
.apps button:nth-child(2) { width: 78px; }
.running { border-bottom: 3px solid #7eb2e0; padding-top: 3px; }
.apps .running:not(.current) { width: 62px; margin: 0 6px 0 7px; }
.current { background: #4f5c65; }
.tray { display: flex; align-items: center; padding-right: 8px; border-right: 8px solid #17252c; }
.tray > svg { width: 24px; margin-right: 12px; }
.cpu { position: relative; display: flex; flex-direction: column; align-items: center; margin-right: 6px; line-height: 26px; }
.cpu svg { position: absolute; left: 18px; top: 16px; }
.ime { font-weight: bold; font-size: 20px; margin: 0 22px 0 2px; }
.pinyin { background: #fff; color: #16242b; width: 22px; line-height: 22px; text-align: center; }
.clock { position: relative; width: 98px; margin: 0 26px 0 24px; display: flex; flex-direction: column; align-items: center; font-size: 19px; white-space: nowrap; }
.rec-dot { position: absolute; right: -6px; top: -8px; width: 6px; height: 5px; border-radius: 3px; background: #e0141c; }
.notice { position: relative; width: 34px; height: 40px; align-items: flex-start; justify-content: flex-start; padding-top: 6px; }
.badge { position: absolute; right: 0; bottom: 0; width: 20px; background: #e0141c; font-size: 14px; line-height: 20px; text-align: center; }
```
